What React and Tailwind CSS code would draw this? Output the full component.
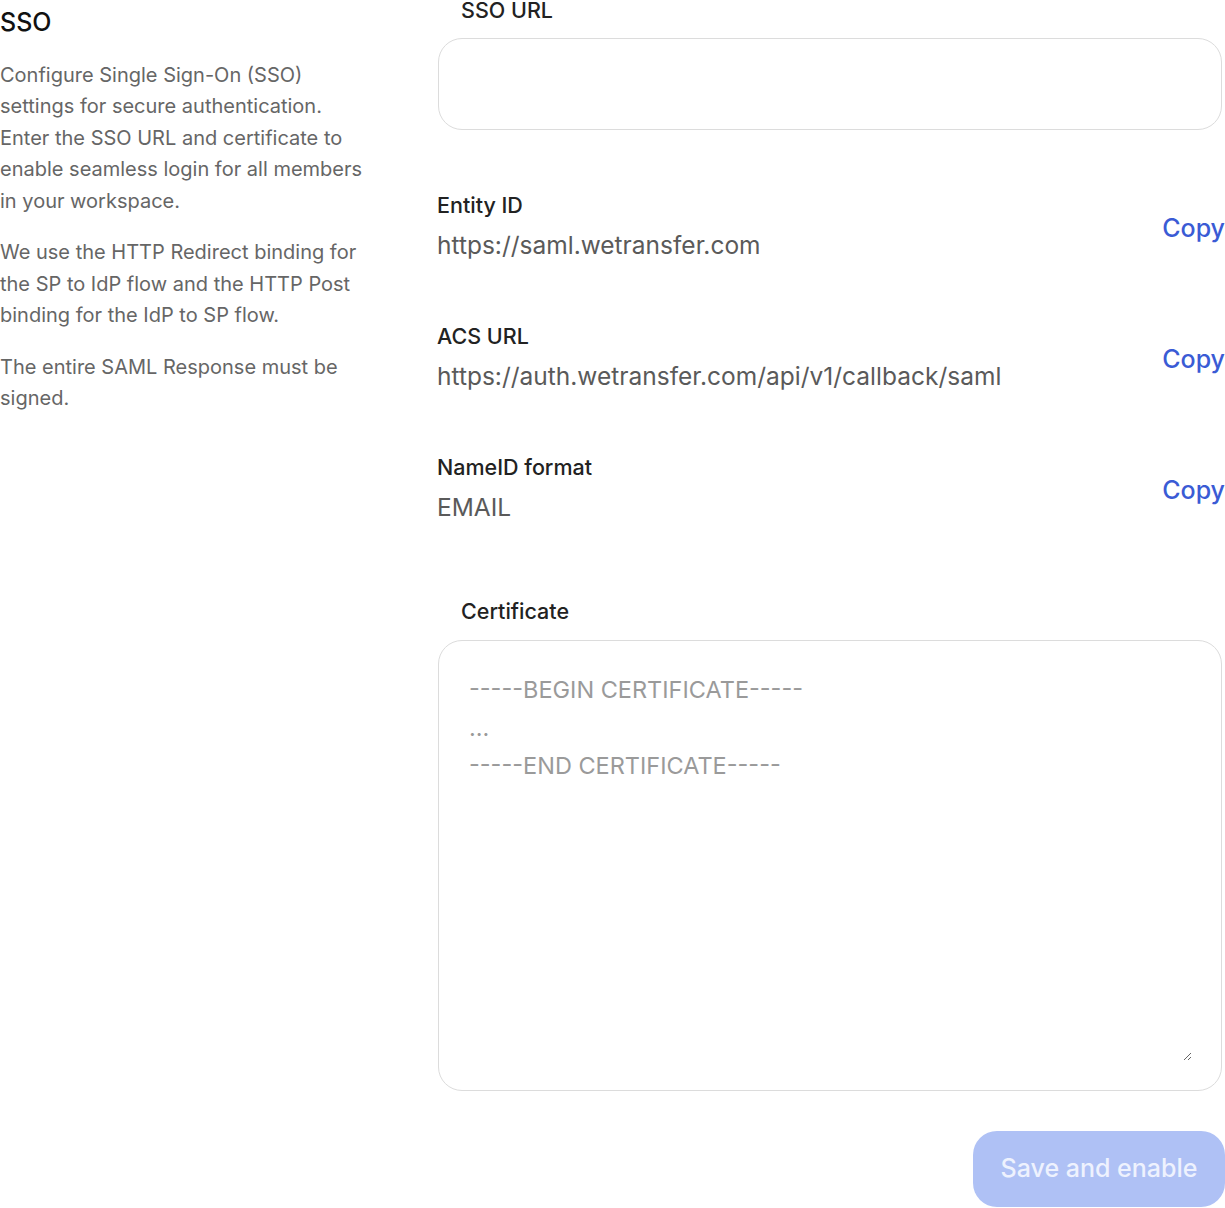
import React from 'react';

const font = { fontFamily: 'Inter, "Noto Sans", sans-serif' };

const fields = [
    { label: 'Entity ID', value: 'https://saml.wetransfer.com' },
    { label: 'ACS URL', value: 'https://auth.wetransfer.com/api/v1/callback/saml' },
    { label: 'NameID format', value: 'EMAIL' }
];

const CopyRow = ({ label, value, last }) => (
    <div className={`flex items-center justify-between ${last ? '' : 'mb-[61px]'}`}>
        <div className="flex flex-col">
            <span className="text-[21.5px] leading-[28px] font-medium text-[#222]">{label}</span>
            <span className="mt-[10px] text-[24.5px] leading-[32px] text-[#5a5a5a]">{value}</span>
        </div>
        <button className="text-[25px] leading-[32px] font-medium text-[#3a5bd5] mt-[4px]">Copy</button>
    </div>
);

const App = () => {
    return (
        <div className="w-[1225px] h-[1208px] overflow-hidden bg-white flex gap-[67px]" style={font}>
            <aside className="w-[370px] shrink-0 flex flex-col">
                <h2 className="text-[25px] leading-[32px] font-medium text-[#111] mt-[6px]">SSO</h2>
                <div className="mt-[21.5px] pr-[4px] flex flex-col gap-[20px] text-[20px] leading-[31.5px] text-[#666]">
                    <p>Configure Single Sign-On (SSO) settings for secure authentication. Enter the SSO URL and certificate to enable seamless login for all members in your workspace.</p>
                    <p>We use the HTTP Redirect binding for the SP to IdP flow and the HTTP Post binding for the IdP to SP flow.</p>
                    <p>The entire SAML Response must be signed.</p>
                </div>
            </aside>

            <main className="flex-1 flex flex-col -mt-[4px]">
                <label className="pl-6 text-[21.5px] leading-[28px] font-medium text-[#222]">SSO URL</label>
                <input
                    type="text"
                    className="mt-[14px] ml-[1px] mr-[3px] h-[92px] rounded-[24px] border border-[#dcdcdc] px-6 text-[24px] text-[#333] outline-none"
                />

                <div className="mt-[61px] flex flex-col">
                    {fields.map((f, i) => (
                        <CopyRow key={f.label} {...f} last={i === fields.length - 1} />
                    ))}
                </div>

                <label className="mt-[74px] pl-6 text-[21.5px] leading-[28px] font-medium text-[#222]">Certificate</label>
                <div className="mt-[15px] ml-[1px] mr-[3px] h-[451px] rounded-[24px] border border-[#dcdcdc] pt-6 pl-6 pr-[29px] pb-[29px] flex">
                    <textarea
                        className="flex-1 pl-[6px] pt-[6px] text-[23.5px] leading-[38px] text-[#333] placeholder:text-[#9a9a9a] outline-none"
                        placeholder={'-----BEGIN CERTIFICATE-----\n...\n-----END CERTIFICATE-----'}
                    />
                </div>

                <div className="mt-[40px] flex justify-end">
                    <button
                        disabled
                        className="h-[76px] w-[252px] rounded-[24px] bg-[#afc1f5] text-[25px] font-medium text-[#eef2fe]"
                    >
                        Save and enable
                    </button>
                </div>
            </main>
        </div>
    );
};

export default App;
